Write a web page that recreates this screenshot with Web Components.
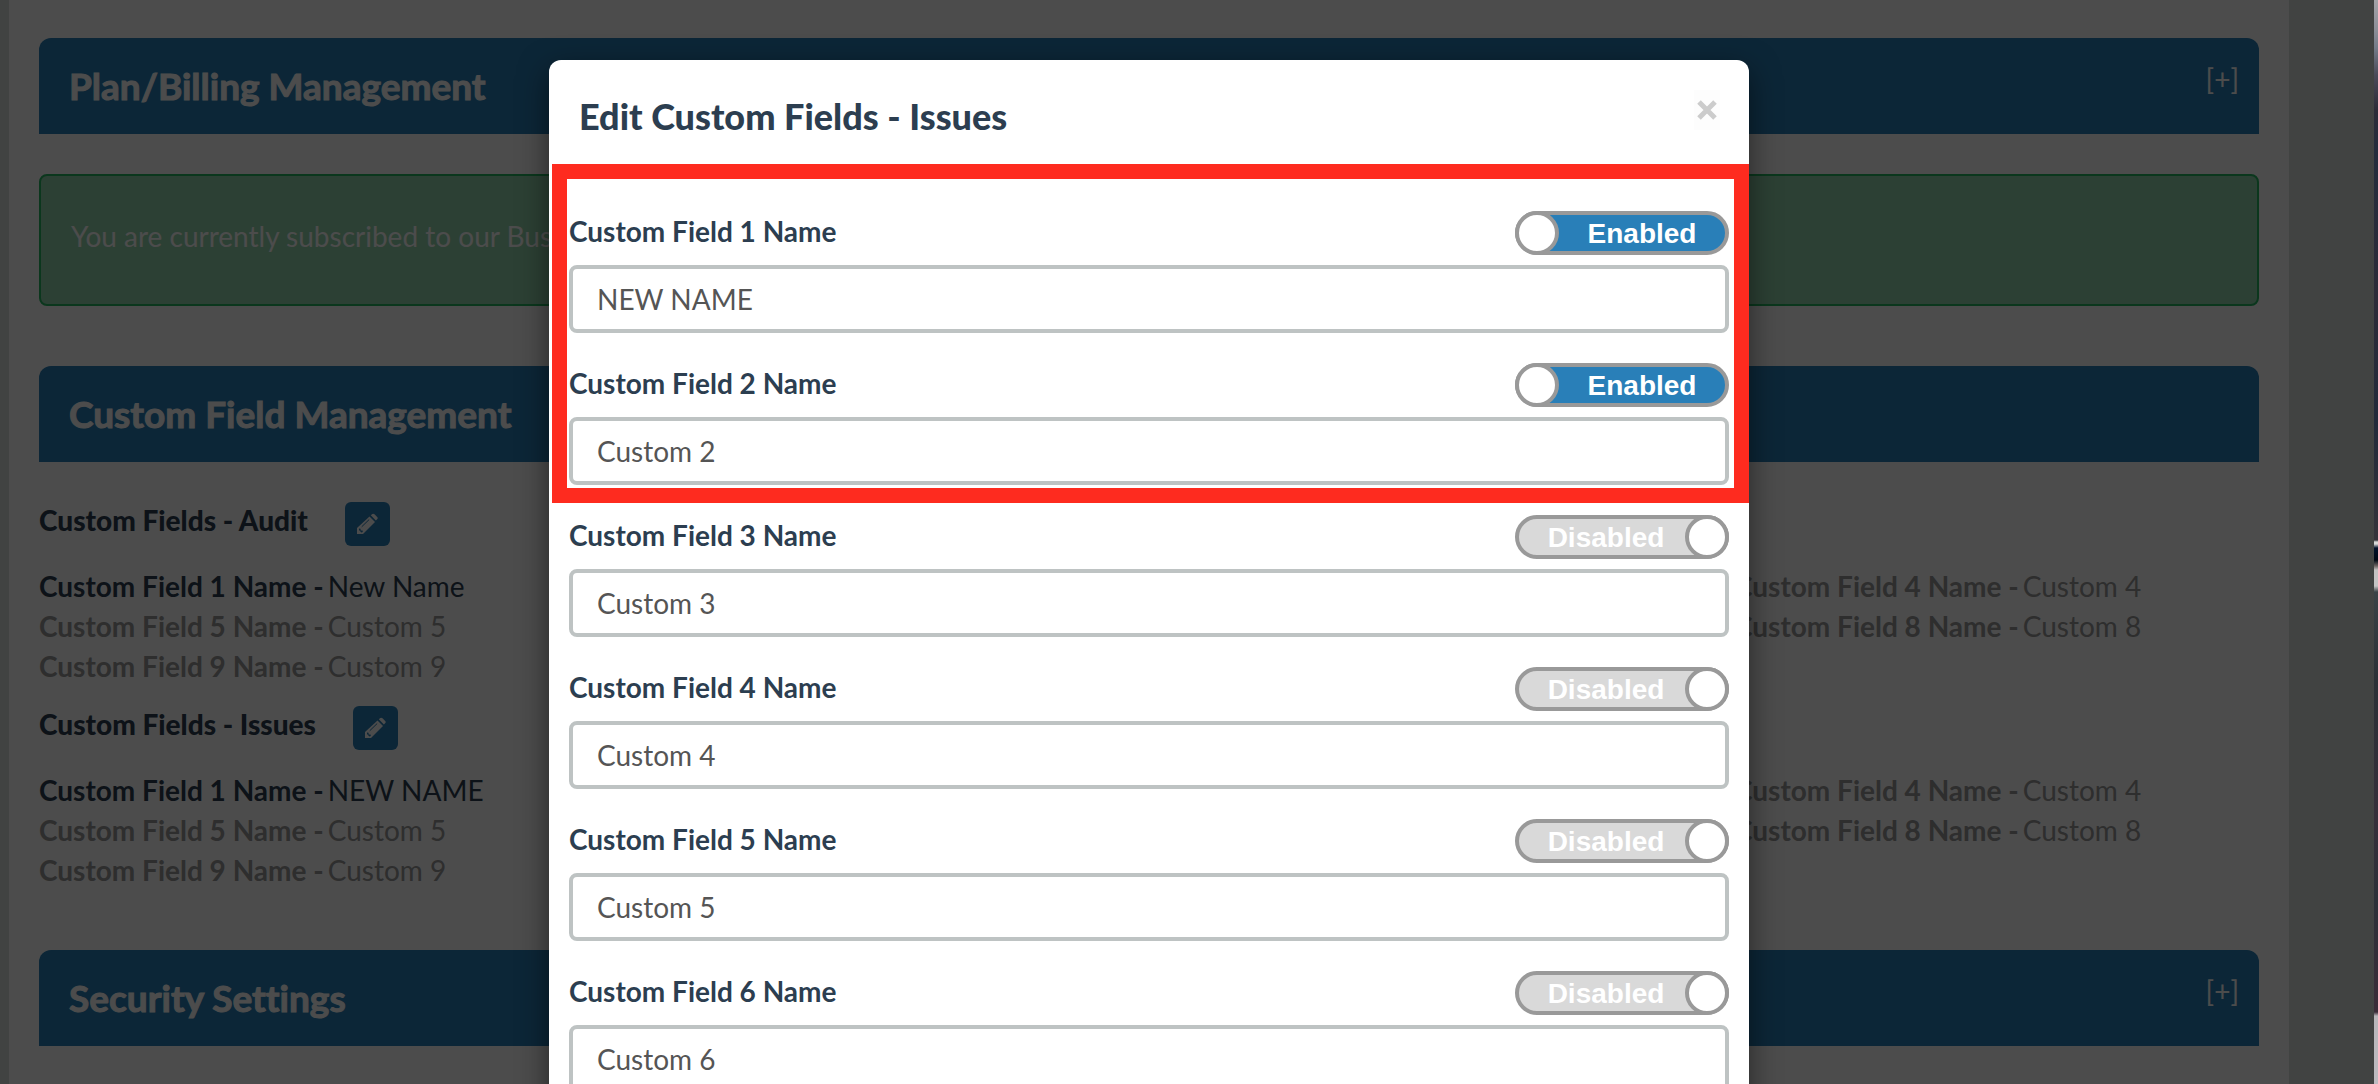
<!DOCTYPE html>
<html lang="en">
<head>
<meta charset="utf-8">
<title>Account Settings</title>
<style>
  html, body { margin: 0; height: 100%; overflow: hidden; }
  body { font-family: Lato, "Open Sans", sans-serif; font-size: 28px; line-height: 40px; color: #2c3e50; font-variant-ligatures: none; }
</style>
</head>
<body>
<app-window>
  <settings-page slot="page">
    <section-header heading="Plan/Billing Management" expandable></section-header>
    <alert-box>You are currently subscribed to our Bus</alert-box>
    <section-header heading="Custom Field Management"></section-header>
    <summary-list>
      <field-summary heading="Custom Fields - Audit">
        <field-entry name="Custom Field 1 Name" value="New Name" active></field-entry>
        <field-entry name="Custom Field 4 Name" value="Custom 4" class="last"></field-entry>
        <field-entry name="Custom Field 5 Name" value="Custom 5"></field-entry>
        <field-entry name="Custom Field 8 Name" value="Custom 8" class="last"></field-entry>
        <field-entry name="Custom Field 9 Name" value="Custom 9"></field-entry>
      </field-summary>
      <field-summary heading="Custom Fields - Issues">
        <field-entry name="Custom Field 1 Name" value="NEW NAME" active></field-entry>
        <field-entry name="Custom Field 4 Name" value="Custom 4" class="last"></field-entry>
        <field-entry name="Custom Field 5 Name" value="Custom 5"></field-entry>
        <field-entry name="Custom Field 8 Name" value="Custom 8" class="last"></field-entry>
        <field-entry name="Custom Field 9 Name" value="Custom 9"></field-entry>
      </field-summary>
    </summary-list>
    <section-header heading="Security Settings" expandable></section-header>
  </settings-page>
  <modal-dialog slot="modal" heading="Edit Custom Fields - Issues">
    <highlight-group>
      <custom-field name="Custom Field 1 Name" value="NEW NAME" enabled></custom-field>
      <custom-field name="Custom Field 2 Name" value="Custom 2" enabled></custom-field>
    </highlight-group>
    <custom-field name="Custom Field 3 Name" value="Custom 3"></custom-field>
    <custom-field name="Custom Field 4 Name" value="Custom 4"></custom-field>
    <custom-field name="Custom Field 5 Name" value="Custom 5"></custom-field>
    <custom-field name="Custom Field 6 Name" value="Custom 6"></custom-field>
  </modal-dialog>
</app-window>

<script>
class BaseElement extends HTMLElement {
  connectedCallback() {
    if (this.shadowRoot) return;
    this.attachShadow({ mode: 'open' }).innerHTML = this.render();
  }
  attr(name) { return this.getAttribute(name) || ''; }
}

// Browser window with a sliver of the desktop showing to its right.
customElements.define('app-window', class extends BaseElement {
  render() {
    return `<style>
      :host { display: flex; height: 100vh; overflow: hidden; }
      .view { flex: 1; position: relative; overflow: hidden; background: #dbe1de; box-sizing: border-box; padding: 0 85px 0 9px; }
      .backdrop { position: absolute; inset: 0; background: rgba(0,0,0,.7); box-sizing: border-box; padding: 60px 85px 0 9px; }
      .desktop { width: 4px; background: linear-gradient(#a3a3a8 0, #8b8e97 30px, #737b88 48px, #4a4a58 75px, #2c2c38 110px,
        #242c3c 150px, #2c2b38 300px, #222a3a 420px, #34333a 540px, #d8d8d8 542px, #d8d8d8 544px, #00102a 548px, #000814 560px,
        #6e6664 566px, #c4c2c2 570px, #c4c4c4 586px, #3a4246 592px, #2b3036 680px, #352f3a 820px, #2c3038 900px, #3a2c38 1012px,
        #b8b6ba 1016px, #bdbbc0 1084px); }
    </style>
    <div class="view"><slot name="page"></slot><div class="backdrop"><slot name="modal"></slot></div></div>
    <div class="desktop"></div>`;
  }
});

customElements.define('settings-page', class extends BaseElement {
  render() {
    return `<style>
      :host { display: block; background: #fff; min-height: 100vh; box-sizing: border-box; padding: 38px 30px; }
    </style><slot></slot>`;
  }
});

customElements.define('section-header', class extends BaseElement {
  render() {
    return `<style>
      :host { display: block; }
      header { display: flex; justify-content: space-between; align-items: center; height: 96px; box-sizing: border-box;
        padding: 0 20px 0 30px; background: #297fb8; color: #fff; border-radius: 12px 12px 0 0; }
      h2 { margin: 0; font-size: 37px; font-weight: 700; line-height: 40px; -webkit-text-stroke: 1px currentColor; }
      button { align-self: flex-start; margin: 21px 0 0; padding: 0; border: 0; background: none; color: inherit;
        font: inherit; font-size: 28px; line-height: 40px; cursor: pointer; }
    </style>
    <header><h2>${this.attr('heading')}</h2>${this.hasAttribute('expandable') ? '<button type="button">[+]</button>' : ''}</header>`;
  }
});

customElements.define('alert-box', class extends BaseElement {
  render() {
    return `<style>
      :host { display: block; margin: 40px 0 60px; padding: 40px 30px 48px; border: 2px solid #25b762; border-radius: 8px;
        background: #93d5ad; color: #fff; }
    </style><slot></slot>`;
  }
});

customElements.define('summary-list', class extends BaseElement {
  render() {
    return `<style>
      :host { display: flex; flex-direction: column; gap: 20px; margin: 40px 0 60px; }
    </style><slot></slot>`;
  }
});

customElements.define('field-summary', class extends BaseElement {
  render() {
    return `<style>
      :host { display: block; }
      .title { display: flex; align-items: flex-start; gap: 37px; margin-bottom: 20px; }
      h3 { margin: 0; font-size: 28px; font-weight: 900; line-height: 36px; }
      button { width: 45px; height: 44px; padding: 0; border: 0; border-radius: 6px; background: #297fb8; color: #fff;
        display: flex; align-items: center; justify-content: center; cursor: pointer; }
      svg { width: 22px; height: 22px; }
      .grid { display: grid; grid-template-columns: repeat(4, 1fr); column-gap: 40px; }
      ::slotted(.last) { grid-column: 4; }
    </style>
    <div class="title"><h3>${this.attr('heading')}</h3>
      <button type="button" aria-label="Edit">
        <svg viewBox="0 0 22 22" fill="none">
          <path fill="#fff" d="M1 21v-6L13.500 3.500l5.500 5.500L7 21z"/>
          <path fill="#fff" d="M14.800 2.300l1.500-1.300q1.100-.8 2.200.2l2.700 2.700q1 1.100.1 2.200l-1.400 1.500z"/>
          <path fill="#297fb8" d="M3 15.400l1.600.3v1.900h2l.2 1.500-1.400.5L3 17z"/>
          <path stroke="#297fb8" d="M5.700 13.800l7.500-7.300"/>
        </svg>
      </button></div>
    <div class="grid"><slot></slot></div>`;
  }
});

customElements.define('field-entry', class extends BaseElement {
  render() {
    return `<style>
      :host { display: flex; gap: 4px; color: #999; white-space: nowrap; }
      :host([active]) { color: #2c3e50; }
      b { font-weight: 700; }
    </style><b>${this.attr('name')} -</b><span>${this.attr('value')}</span>`;
  }
});

customElements.define('modal-dialog', class extends BaseElement {
  render() {
    return `<style>
      :host { display: block; box-sizing: border-box; width: 1200px; max-width: 100%; margin: 0 auto; background: #fff;
        border-radius: 12px; box-shadow: 0 10px 30px rgba(0,0,0,.5); }
      header { display: flex; justify-content: space-between; height: 104px; box-sizing: border-box; padding: 30px 29px 30px 30px; }
      h2 { margin: 6px 0 0; font-size: 36px; font-weight: 900; line-height: 40px; }
      button { margin: 0; padding: 0; width: 26px; height: 40px; border: 0; background: #fdfdfd; color: #ccc;
        display: flex; align-items: center; justify-content: center; cursor: pointer; }
      svg { width: 20px; height: 20px; }
      .body { padding: 47px 20px; display: flex; flex-direction: column; gap: 30px; }
    </style>
    <header><h2>${this.attr('heading')}</h2>
      <button type="button" aria-label="Close"><svg viewBox="0 0 20 20"><path d="M2 2l16 16M18 2L2 18" stroke="#ccc" stroke-width="5"/></svg></button>
    </header>
    <div class="body"><slot></slot></div>`;
  }
});

// Marks a run of fields with a red frame laid over the dialog.
customElements.define('highlight-group', class extends BaseElement {
  render() {
    return `<style>
      :host { position: relative; display: flex; flex-direction: column; gap: 30px; }
      .frame { position: absolute; inset: -47px -20px -18px -17px; border: 15px solid #fe2b1f; pointer-events: none; }
    </style><slot></slot><div class="frame"></div>`;
  }
});

customElements.define('custom-field', class extends BaseElement {
  render() {
    const on = this.hasAttribute('enabled');
    return `<style>
      :host { display: flex; flex-direction: column; gap: 10px; }
      .row { display: flex; justify-content: space-between; align-items: flex-start; height: 44px; }
      .name { font-weight: 700; line-height: 40px; }
      .text { width: 100%; height: 68px; box-sizing: border-box; border: 4px solid #bec3c3; border-radius: 8px; padding: 0 24px;
        background: #fff; color: #555; font: inherit; font-size: 28px; outline: 0; }
      .toggle { display: flex; box-sizing: border-box; width: 214px; height: 44px; border: 4px solid #999; border-radius: 22px;
        background: #d9d9d9; color: #fff; font: bold 28px/38px "Liberation Sans", Arial, sans-serif; cursor: pointer; }
      .toggle span { flex: 1; text-align: center; padding-left: 4px; }
      .toggle input { appearance: none; box-sizing: border-box; flex: none; width: 44px; height: 44px; margin: -4px;
        border: 4px solid #999; border-radius: 50%; background: #fff; order: 1; }
      .toggle.on { background: #297fb8; }
      .toggle.on input { order: -1; }
    </style>
    <div class="row">
      <label class="name" for="value">${this.attr('name')}</label>
      <label class="toggle ${on ? 'on' : ''}"><input type="checkbox" role="switch" ${on ? 'checked' : ''}><span>${on ? 'Enabled' : 'Disabled'}</span></label>
    </div>
    <input class="text" id="value" type="text" value="${this.attr('value')}">`;
  }
});
</script>
</body>
</html>
